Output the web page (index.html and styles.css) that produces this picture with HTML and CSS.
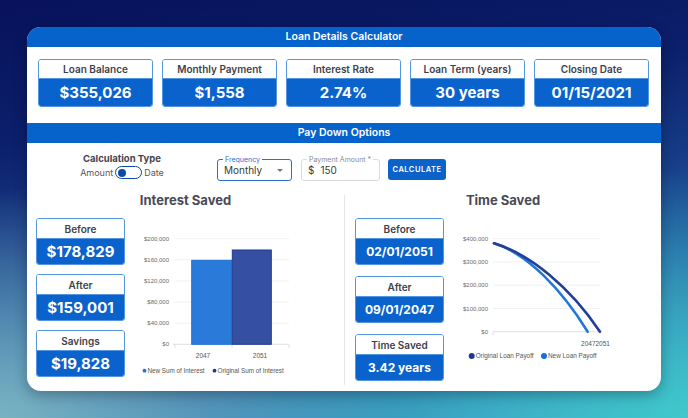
FILE: index.html
```html
<!DOCTYPE html>
<html lang="en">
<head>
<meta charset="utf-8">
<title>Loan Details Calculator</title>
<link rel="stylesheet" href="styles.css">
</head>
<body>
<div class="stage">
  <div class="card">
    <div class="bar">Loan Details Calculator</div>
    <div class="stats">
      <div class="stat"><div class="stat-label">Loan Balance</div><div class="stat-value">$355,026</div></div>
      <div class="stat"><div class="stat-label">Monthly Payment</div><div class="stat-value">$1,558</div></div>
      <div class="stat"><div class="stat-label">Interest Rate</div><div class="stat-value">2.74%</div></div>
      <div class="stat"><div class="stat-label">Loan Term (years)</div><div class="stat-value">30 years</div></div>
      <div class="stat"><div class="stat-label">Closing Date</div><div class="stat-value">01/15/2021</div></div>
    </div>
    <div class="bar">Pay Down Options</div>
    <div class="controls">
      <div class="calc-type">
        <div class="calc-title">Calculation Type</div>
        <div class="calc-row"><span>Amount</span><span class="toggle"><span class="knob"></span></span><span>Date</span></div>
      </div>
      <div class="field select">
        <span class="field-label active">Frequency</span>
        <span class="field-text">Monthly</span>
        <span class="caret"></span>
      </div>
      <div class="field amount">
        <span class="field-label">Payment Amount *</span>
        <span class="field-text"><span class="prefix">$</span>150</span>
      </div>
      <button class="btn" type="button">CALCULATE</button>
    </div>
    <div class="results">
      <section class="panel">
        <h2 class="panel-title">Interest Saved</h2>
        <div class="panel-body">
          <div class="kpis">
            <div class="kpi"><div class="kpi-label">Before</div><div class="kpi-value">$178,829</div></div>
            <div class="kpi"><div class="kpi-label">After</div><div class="kpi-value">$159,001</div></div>
            <div class="kpi"><div class="kpi-label">Savings</div><div class="kpi-value">$19,828</div></div>
          </div>
          <svg class="chart bar-chart" width="152" height="145" viewBox="0 0 152 145">
            <g stroke="#eceef1" stroke-width="0.8">
              <line x1="35" x2="149" y1="6.7" y2="6.7"/>
              <line x1="35" x2="149" y1="27.8" y2="27.8"/>
              <line x1="35" x2="149" y1="48.9" y2="48.9"/>
              <line x1="35" x2="149" y1="70" y2="70"/>
              <line x1="35" x2="149" y1="91.2" y2="91.2"/>
            </g>
            <g stroke="#d6d8dc" stroke-width="0.8">
              <line x1="33" x2="149" y1="112.3" y2="112.3"/>
              <line x1="35" x2="35" y1="112.3" y2="116"/>
              <line x1="92" x2="92" y1="112.3" y2="116"/>
              <line x1="149" x2="149" y1="112.3" y2="116"/>
            </g>
            <rect x="51.7" y="28.3" width="40" height="84" fill="#2a7bd9" stroke="#1f6fd6" stroke-width="1"/>
            <rect x="92.3" y="18" width="39" height="94.3" fill="#3550a1" stroke="#1f3a92" stroke-width="1"/>
            <g font-family="'Liberation Sans', Arial, sans-serif" font-size="6" fill="#6b6b6b" text-anchor="end">
              <text x="29" y="8.8">$200,000</text>
              <text x="29" y="29.9">$160,000</text>
              <text x="29" y="51">$120,000</text>
              <text x="29" y="72.1">$80,000</text>
              <text x="29" y="93.3">$40,000</text>
              <text x="29" y="114.4">$0</text>
            </g>
            <g font-family="'Liberation Sans', Arial, sans-serif" font-size="6.5" fill="#555" text-anchor="middle">
              <text x="63" y="126">2047</text>
              <text x="120" y="126">2051</text>
            </g>
            <g font-family="'Liberation Sans', Arial, sans-serif" font-size="6.3" fill="#555">
              <circle cx="4.5" cy="138.7" r="1.9" fill="#1f74d6"/>
              <text x="7.5" y="140.9">New Sum of Interest</text>
              <circle cx="74.5" cy="138.7" r="1.9" fill="#1d3a8f"/>
              <text x="77.5" y="140.9">Original Sum of Interest</text>
            </g>
          </svg>
        </div>
      </section>
      <section class="panel panel-right">
        <h2 class="panel-title">Time Saved</h2>
        <div class="panel-body">
          <div class="kpis kpis-loose">
            <div class="kpi"><div class="kpi-label">Before</div><div class="kpi-value small">02/01/2051</div></div>
            <div class="kpi"><div class="kpi-label">After</div><div class="kpi-value small">09/01/2047</div></div>
            <div class="kpi"><div class="kpi-label">Time Saved</div><div class="kpi-value small">3.42 years</div></div>
          </div>
          <svg class="chart line-chart" width="152" height="132" viewBox="0 0 152 132">
            <g stroke="#eceef1" stroke-width="0.8">
              <line x1="33" x2="140.7" y1="6.7" y2="6.7"/>
              <line x1="33" x2="140.7" y1="29.95" y2="29.95"/>
              <line x1="33" x2="140.7" y1="53.2" y2="53.2"/>
              <line x1="33" x2="140.7" y1="76.45" y2="76.45"/>
            </g>
            <g stroke="#d6d8dc" stroke-width="0.8">
              <line x1="33" x2="140.7" y1="99.7" y2="99.7"/>
              <line x1="33" x2="33" y1="99.7" y2="103.5"/>
            </g>
            <path d="M34 11.3 C68 22 102 58 127.7 99.7" fill="none" stroke="#1f78d9" stroke-width="2.6" stroke-linecap="round"/>
            <path d="M34 11.3 C70 22 110 55 140 99.7" fill="none" stroke="#233f94" stroke-width="2.6" stroke-linecap="round"/>
            <g font-family="'Liberation Sans', Arial, sans-serif" font-size="6" fill="#6b6b6b" text-anchor="end">
              <text x="28" y="8.8">$400,000</text>
              <text x="28" y="32">$300,000</text>
              <text x="28" y="55.3">$200,000</text>
              <text x="28" y="78.5">$100,000</text>
              <text x="28" y="101.8">$0</text>
            </g>
            <text x="135.5" y="113.6" font-family="'Liberation Sans', Arial, sans-serif" font-size="6.5" fill="#555" text-anchor="middle">20472051</text>
            <g font-family="'Liberation Sans', Arial, sans-serif" font-size="6.4" fill="#555">
              <circle cx="11.7" cy="124" r="3" fill="#1d3a8f"/>
              <text x="15.8" y="126.2">Original Loan Payoff</text>
              <circle cx="84" cy="124" r="3" fill="#1a6fd6"/>
              <text x="88" y="126.2">New Loan Payoff</text>
            </g>
          </svg>
        </div>
      </section>
    </div>
  </div>
</div>
</body>
</html>
```

FILE: styles.css
```css
* { box-sizing: border-box; }

html, body {
  margin: 0;
  padding: 0;
}

body {
  width: 688px;
  height: 418px;
  overflow: hidden;
  font-family: Inter, "Noto Sans", "Liberation Sans", sans-serif;
  background:
    radial-gradient(ellipse 70% 60% at 100% 100%, #3fc8cc 0%, rgba(63, 200, 204, 0) 100%),
    radial-gradient(ellipse 60% 55% at 0% 100%, #78b2c2 0%, rgba(120, 178, 194, 0) 100%),
    linear-gradient(172deg, #07125a 0%, #0c1f6c 28%, #1d4f98 62%, #3a8fbf 100%);
}

.stage {
  padding: 27px 27px 0 27px;
}

.card {
  width: 634px;
  height: 364px;
  background: #ffffff;
  border-radius: 14px;
  overflow: hidden;
  box-shadow: 0 4px 14px rgba(0, 0, 20, 0.3);
}

.bar {
  height: 20px;
  line-height: 20px;
  background: #0563cb;
  color: #ffffff;
  text-align: center;
  font-size: 10.5px;
  font-weight: 600;
}

.stats {
  display: flex;
  gap: 9px;
  padding: 12px 12px 16px 11px;
}

.stat {
  width: 115px;
  height: 48px;
  border: 1.5px solid #5596e3;
  border-radius: 3px;
  overflow: hidden;
  display: flex;
  flex-direction: column;
}

.stat-label {
  height: 19px;
  line-height: 19px;
  text-align: center;
  font-size: 10px;
  font-weight: 600;
  color: #3f3f4b;
  background: #ffffff;
  border-bottom: 1px solid #5596e3;
}

.stat-value {
  flex: 1;
  display: flex;
  align-items: center;
  justify-content: center;
  background: #0a63cd;
  color: #ffffff;
  font-size: 15px;
  font-weight: 700;
}

.controls {
  display: flex;
  align-items: flex-start;
  padding: 16px 0 0 50px;
  height: 38px;
}

.calc-type {
  width: 90px;
  margin-top: -6px;
  display: flex;
  flex-direction: column;
  align-items: center;
  color: #555560;
}

.calc-title {
  font-size: 9.5px;
  font-weight: 700;
  color: #44444f;
  line-height: 12px;
}

.calc-row {
  display: flex;
  align-items: center;
  gap: 2px;
  font-size: 9px;
  line-height: 13px;
  margin-top: 1px;
}

.toggle {
  width: 27px;
  height: 13px;
  border: 1.5px solid #0d4aa6;
  border-radius: 7px;
  display: flex;
  align-items: center;
  padding-left: 2px;
}

.knob {
  width: 8px;
  height: 8px;
  border-radius: 50%;
  background: #0d4aa6;
}

.field {
  position: relative;
  height: 22px;
  border-radius: 3px;
  display: flex;
  align-items: center;
  padding: 0 8px 0 6px;
  font-size: 10px;
  color: #3a3a3a;
}

.select {
  width: 75px;
  margin-left: 50px;
  border: 1.5px solid #2a6fd0;
}

.amount {
  width: 79px;
  margin-left: 9px;
  border: 1px solid #d8dbe0;
}

.field-label {
  position: absolute;
  top: -5px;
  left: 5px;
  padding: 0 2px;
  background: #ffffff;
  font-size: 7px;
  line-height: 9px;
  color: #8a8a90;
}

.field-label.active {
  color: #2a6fd0;
}

.field-text {
  flex: 1;
}

.prefix {
  margin-right: 6px;
}

.caret {
  width: 0;
  height: 0;
  border-left: 3px solid transparent;
  border-right: 3px solid transparent;
  border-top: 3.5px solid #777777;
}

.btn {
  width: 58px;
  height: 21px;
  margin-left: 8px;
  border: none;
  border-radius: 3px;
  background: #0b62c9;
  color: #ffffff;
  font-family: inherit;
  font-size: 7.5px;
  font-weight: 600;
  letter-spacing: 0.5px;
  padding: 0;
}

.results {
  display: grid;
  grid-template-columns: 317px 317px;
  height: 190px;
  margin-top: 14px;
}

.panel {
  display: flex;
  flex-direction: column;
}

.panel-right {
  border-left: 1px solid #e3e5e9;
}

.panel-title {
  margin: 0 0 13px 0;
  font-size: 13px;
  font-weight: 700;
  line-height: 10px;
  height: 10px;
  text-align: center;
  color: #4a4a56;
}

.panel-body {
  display: flex;
  align-items: flex-start;
  padding-left: 9px;
}

.panel-right .panel-body {
  padding-left: 10px;
}

.kpis {
  width: 89px;
  display: flex;
  flex-direction: column;
  gap: 9px;
}

.kpis-loose {
  gap: 11px;
}

.kpi {
  height: 47px;
  border: 1.5px solid #5596e3;
  border-radius: 3px;
  overflow: hidden;
  display: flex;
  flex-direction: column;
}

.kpi-label {
  height: 20px;
  line-height: 20px;
  text-align: center;
  font-size: 10px;
  font-weight: 600;
  color: #3f3f4b;
  background: #ffffff;
  border-bottom: 1px solid #5596e3;
}

.kpi-value {
  flex: 1;
  display: flex;
  align-items: center;
  justify-content: center;
  background: #0a63cd;
  color: #ffffff;
  font-size: 15px;
  font-weight: 700;
}

.kpi-value.small {
  font-size: 12px;
}

.chart {
  display: block;
  margin-top: 14px;
  flex: none;
}

.bar-chart {
  margin-left: 15px;
}

.line-chart {
  margin-left: 16px;
}
```
